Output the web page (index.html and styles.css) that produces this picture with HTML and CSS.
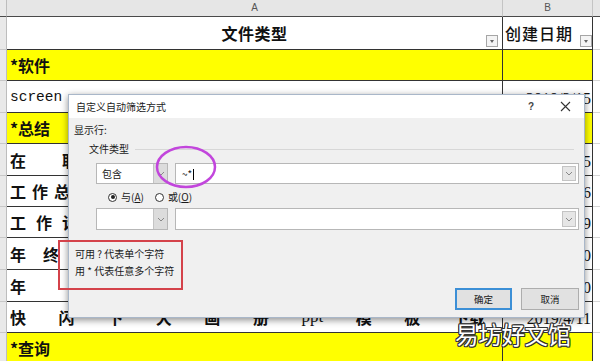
FILE: index.html
```html
<!DOCTYPE html>
<html lang="zh-CN">
<head>
  <meta charset="UTF-8">
  <meta name="viewport" content="width=device-width, initial-scale=1.0">
  <title>自定义自动筛选方式</title>
  <link rel="stylesheet" href="styles.css">
</head>
<body>
  <div class="sheet">
    <div class="row colhead">
      <div class="rh"></div>
      <div class="ch">A</div>
      <div class="ch">B</div>
      <div class="rest"></div>
    </div>

    <div class="row h33 head">
      <div class="rh"></div>
      <div class="a title">文件类型<span class="filter"></span></div>
      <div class="b title">创建日期<span class="filter"></span></div>
      <div class="rest"></div>
    </div>

    <div class="row yellow">
      <div class="rh"></div>
      <div class="a">*软件</div>
      <div class="b"></div>
      <div class="rest"></div>
    </div>

    <div class="row h32">
      <div class="rh"></div>
      <div class="a mono">screen</div>
      <div class="b date">2019/3/15</div>
      <div class="rest"></div>
    </div>

    <div class="row yellow">
      <div class="rh"></div>
      <div class="a">*总结</div>
      <div class="b"></div>
      <div class="rest"></div>
    </div>

    <div class="row h32">
      <div class="rh"></div>
      <div class="a ls36">在职</div>
      <div class="b date">2019/3/25</div>
      <div class="rest"></div>
    </div>

    <div class="row">
      <div class="rh"></div>
      <div class="a ls6">工作总结</div>
      <div class="b date">2019/3/26</div>
      <div class="rest"></div>
    </div>

    <div class="row">
      <div class="rh"></div>
      <div class="a ls10">工作计划</div>
      <div class="b date">2019/3/29</div>
      <div class="rest"></div>
    </div>

    <div class="row h32">
      <div class="rh"></div>
      <div class="a ls17">年终</div>
      <div class="b date">2019/3/30</div>
      <div class="rest"></div>
    </div>

    <div class="row h32">
      <div class="rh"></div>
      <div class="a ls60">年会</div>
      <div class="b date">2019/3/30</div>
      <div class="rest"></div>
    </div>

    <div class="row">
      <div class="rh"></div>
      <div class="a spread">
        <span>快</span><span>闪</span><span>下</span><span>大</span><span>画</span><span>册</span><span class="latin">ppt</span><span>模</span><span>板</span><span>下载</span>
      </div>
      <div class="b date">2019/4/11</div>
      <div class="rest"></div>
    </div>

    <div class="row yellow">
      <div class="rh"></div>
      <div class="a">*查询</div>
      <div class="b"></div>
      <div class="rest"></div>
    </div>
  </div>

  <!-- 筛选对话框 -->
  <div class="dialog">
    <div class="titlebar">
      <span class="caption">自定义自动筛选方式</span>
      <span class="help">?</span>
      <span class="close">
        <svg width="11" height="11" viewBox="0 0 11 11"><path d="M1 1L10 10M10 1L1 10" stroke="#333" stroke-width="1.1" fill="none"/></svg>
      </span>
    </div>
    <div class="body">
      <div class="line">显示行:</div>
      <div class="group">文件类型</div>

      <div class="combos">
        <div class="op">
          <span class="op-text">包含</span>
          <span class="op-btn"><svg width="8" height="5" viewBox="0 0 8 5"><path d="M1 1L4 4L7 1" stroke="#888" fill="none"/></svg></span>
        </div>
        <div class="val">
          <span class="val-text">~*<i class="caret"></i></span>
          <span class="val-btn"><svg width="8" height="5" viewBox="0 0 8 5"><path d="M1 1L4 4L7 1" stroke="#888" fill="none"/></svg></span>
        </div>
      </div>

      <div class="radios">
        <label class="radio"><span class="dot on"></span>与(<u>A</u>)</label>
        <label class="radio"><span class="dot"></span>或(<u>O</u>)</label>
      </div>

      <div class="combos second">
        <div class="op">
          <span class="op-text"></span>
          <span class="op-btn"><svg width="8" height="5" viewBox="0 0 8 5"><path d="M1 1L4 4L7 1" stroke="#888" fill="none"/></svg></span>
        </div>
        <div class="val">
          <span class="val-text"></span>
          <span class="val-btn"><svg width="8" height="5" viewBox="0 0 8 5"><path d="M1 1L4 4L7 1" stroke="#888" fill="none"/></svg></span>
        </div>
      </div>

      <div class="hint">
        <p>可用 ? 代表单个字符</p>
        <p>用 * 代表任意多个字符</p>
      </div>

      <div class="buttons">
        <button class="btn primary">确定</button>
        <button class="btn">取消</button>
      </div>
    </div>
  </div>

  <!-- 标注 -->
  <div class="redbox"></div>
  <svg class="ring" width="70" height="48" viewBox="0 0 70 48">
    <ellipse cx="35" cy="24" rx="29" ry="20" fill="none" stroke="#c246dc" stroke-width="2.5"/>
  </svg>

  <div class="watermark">易坊好文馆</div>
</body>
</html>
```

FILE: styles.css
```css
body {
  margin: 0;
  width: 600px;
  height: 361px;
  overflow: hidden;
  position: relative;
  background: #fff;
  font-family: "Noto Sans CJK SC", sans-serif;
  color: #111;
}

/* sheet */
.row {
  display: grid;
  grid-template-columns: 7px 496px 90px 1fr;
  height: 31px;
}
.row.h32 {
  height: 32px;
}
.row.h33 {
  height: 33px;
}
.row > div {
  box-sizing: border-box;
  overflow: hidden;
  white-space: nowrap;
}
.rh {
  background: #e9e9e9;
  border-right: 1px solid #bdbdbd;
  border-bottom: 1px solid #c8c8c8;
}
.rest {
  border-bottom: 1px solid #d6d6d6;
}
.a, .b {
  border-right: 1px solid #333;
  border-bottom: 1px solid #333;
  font-size: 16px;
  font-weight: 700;
  display: flex;
  align-items: center;
}
.a {
  padding: 0 3px;
}
.yellow .a, .yellow .b {
  background: #ffff00;
}
.ls6 { letter-spacing: 6px; }
.ls10 { letter-spacing: 10px; }
.ls17 { letter-spacing: 17px; }
.ls36 { letter-spacing: 36px; }
.ls60 { letter-spacing: 60px; }

.colhead {
  height: 17px;
  background: #e6e6e6;
}
.colhead > div {
  border-bottom: 1px solid #4a4a4a;
}
.ch {
  border-right: 1px solid #c4c4c4;
  font-family: "Liberation Sans", sans-serif;
  font-size: 10px;
  color: #555;
  text-align: center;
  line-height: 16px;
}
.colhead .rest {
  background: #e6e6e6;
}

.head .title {
  position: relative;
  font-weight: 700;
  letter-spacing: 0.5px;
}
.head .a {
  justify-content: center;
}
.head .b {
  padding-left: 2px;
  letter-spacing: 1px;
  font-weight: 500;
}
.filter {
  position: absolute;
  right: 4px;
  bottom: 2px;
  width: 10px;
  height: 10px;
  background: #f4f4f4;
  border: 1px solid #a6a6a6;
}
.head .b .filter {
  right: 0;
}
.filter::after {
  content: "";
  position: absolute;
  left: 3px;
  top: 4px;
  border-left: 2px solid transparent;
  border-right: 2px solid transparent;
  border-top: 3px solid #666;
}

.mono {
  font-family: "Liberation Mono", monospace;
  font-weight: 400;
  font-size: 14.5px;
}
.spread {
  justify-content: space-between;
  padding-right: 17px;
}
.spread .latin {
  font-family: "Liberation Serif", serif;
  font-weight: 400;
  font-size: 17px;
}
.date {
  justify-content: flex-end;
  padding: 4px 1px 0 0;
  font-family: "Liberation Serif", serif;
  font-weight: 400;
  font-size: 16px;
}

/* dialog */
.dialog {
  position: absolute;
  left: 68px;
  top: 94px;
  width: 517px;
  height: 224px;
  box-sizing: border-box;
  background: #f0f0f0;
  border: 1px solid #a9b7c9;
  box-shadow: 0 2px 7px rgba(0, 0, 0, 0.45);
  font-size: 10px;
  color: #1a1a1a;
}
.titlebar {
  height: 23px;
  background: #fff;
  display: flex;
  align-items: center;
  padding: 0 13px 0 7px;
}
.caption {
  flex: 1;
}
.help {
  font-family: "Liberation Sans", sans-serif;
  font-size: 10px;
  font-weight: 700;
  color: #444;
  margin-right: 26px;
}
.close {
  display: flex;
}
.body {
  padding: 0 5px;
}
.line {
  margin-top: 5px;
  line-height: 14px;
}
.group {
  display: flex;
  align-items: center;
  margin: 5px 5px 0 15px;
  line-height: 14px;
}
.group::after {
  content: "";
  flex: 1;
  height: 1px;
  background: #d7d7d7;
  margin-left: 6px;
}
.combos {
  display: flex;
  gap: 7px;
  margin: 7px 0 0 22px;
  height: 21px;
}
.combos.second {
  margin-top: 4px;
  height: 22px;
}
.op, .val {
  display: flex;
  box-sizing: border-box;
  border: 1px solid #b7b7b7;
  background: #fff;
}
.op {
  width: 72px;
}
.op-text {
  flex: 1;
  padding-left: 5px;
  line-height: 19px;
}
.op-btn {
  width: 13px;
  background: #dcdcdc;
  border-left: 1px solid #c4c4c4;
  display: flex;
  align-items: center;
  justify-content: center;
}
.val {
  flex: 1;
  padding: 2px;
}
.val-text {
  flex: 1;
  padding-left: 4px;
  line-height: 15px;
}
.caret {
  display: inline-block;
  width: 1px;
  height: 11px;
  background: #000;
  vertical-align: -2px;
  margin-left: 1px;
}
.val-btn {
  width: 12px;
  background: #e6e6e6;
  border: 1px solid #c4c4c4;
  display: flex;
  align-items: center;
  justify-content: center;
}
.radios {
  display: flex;
  gap: 11px;
  margin: 6px 0 0 34px;
  line-height: 14px;
}
.radio {
  display: flex;
  align-items: center;
}
.dot {
  width: 9px;
  height: 9px;
  box-sizing: border-box;
  border: 1px solid #333;
  border-radius: 50%;
  margin-right: 4px;
  position: relative;
  background: #fff;
}
.dot.on::after {
  content: "";
  position: absolute;
  left: 1.5px;
  top: 1.5px;
  width: 4px;
  height: 4px;
  border-radius: 50%;
  background: #222;
}
.hint {
  margin-top: 15px;
  padding-left: 1px;
}
.hint p {
  margin: 0;
  line-height: 17px;
}
.buttons {
  display: flex;
  justify-content: flex-end;
  gap: 9px;
  margin-top: 9px;
}
.btn {
  width: 58px;
  height: 22px;
  box-sizing: border-box;
  border: 1px solid #adadad;
  background: #e1e1e1;
  font-family: "Noto Sans CJK SC", sans-serif;
  font-size: 9.5px;
  color: #1a1a1a;
  padding: 0;
}
.btn.primary {
  width: 57px;
  border: 2px solid #3c8fd6;
}

/* annotations */
.redbox {
  position: absolute;
  left: 58px;
  top: 240px;
  width: 125px;
  height: 50px;
  box-sizing: border-box;
  border: 2px solid #d4424a;
}
.ring {
  position: absolute;
  left: 151px;
  top: 143px;
}
.watermark {
  position: absolute;
  left: 455px;
  top: 319px;
  font-size: 23.5px;
  line-height: 30px;
  color: #fff;
  letter-spacing: -0.3px;
  text-shadow: 1px 0 0 #333, -1px 0 0 #333, 0 1px 0 #333, 0 -1px 0 #333,
    1px 1px 0 #333, -1px -1px 0 #333, 1px -1px 0 #333, -1px 1px 0 #333;
}
```
